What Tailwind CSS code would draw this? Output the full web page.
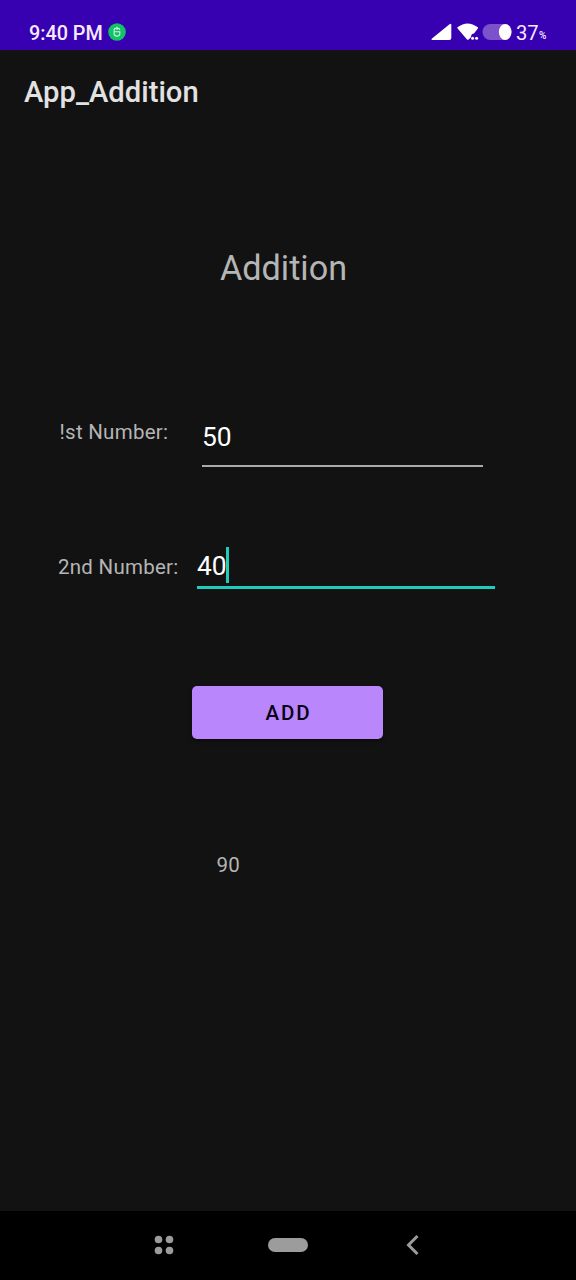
<!DOCTYPE html>
<html lang="en">
<head>
<meta charset="utf-8">
<title>App_Addition</title>
<script src="https://cdn.jsdelivr.net/npm/@tailwindcss/browser@4"></script>
</head>
<body class="bg-[#121212]">
<div class="flex h-[1280px] w-[576px] flex-col overflow-hidden bg-[#121212] font-['Roboto',sans-serif] whitespace-nowrap">
  <header class="flex h-[50px] shrink-0 items-start bg-[#3700b1] pt-[22px] pr-[28px] pl-[29px] text-[#f6e9ff]">
    <span class="mt-[1px] w-[73px] text-[19.800px] leading-[22px] font-medium">9:40 PM</span>
    <svg class="mt-[1px] ml-[5.500px] size-[18px]" viewBox="0 0 18 18" fill="none">
      <circle cx="9" cy="9" r="8.8" fill="#13c266"/>
      <path d="M11.800 7C11.400 4.500 6.300 4.500 6.100 7v4.200c.4 2.600 5.400 2.600 5.700.1V8.800H6.200M9 3.800V7" stroke="#c9f5dc" stroke-width="1.100"/>
    </svg>
    <div class="flex-1"></div>
    <svg class="mt-[1px] h-[18px] w-[22px]" viewBox="0 0 22 18"><path d="M1 15.500 18.500 1.200Q20.300-.2 20.300 2v13q0 2-2 2H2Q-.3 17 1 15.500Z" fill="#fff"/></svg>
    <svg class="mt-[1px] ml-[4px] h-[18px] w-[22px]" viewBox="0 0 22 18" fill="#fff">
      <path d="M.5 4.300Q10.500-3.500 20.800 4.300q.5.600 0 1.300L17 10.400q-2.900.2-3.100 3.800L11.700 16.500q-.9.600-1.700-.1L.6 5.600Q0 4.900.5 4.300Z"/>
      <circle cx="15.600" cy="15.200" r="1.500"/><circle cx="19.600" cy="15.200" r="1.500"/>
    </svg>
    <svg class="mt-[1px] ml-[3px] h-[18px] w-[31px]" viewBox="0 0 31 18"><rect x=".5" y="1" width="29" height="16" rx="8" fill="#7c52ca"/><ellipse cx="23.200" cy="9" rx="6.300" ry="8" fill="#fff"/></svg>
    <span class="ml-[3px] w-[23px] text-[20.200px] leading-[22px]">37</span><span class="mt-[5px] w-[9px] text-[10px] leading-[18px] font-medium">%</span>
  </header>
  <div class="flex h-[86px] shrink-0 items-center pl-[24px]">
    <h1 class="text-[29.200px] leading-none font-medium text-[#e2e2e2]">App_Addition</h1>
  </div>
  <main class="flex flex-1 flex-col text-[20.500px] text-[#b5b5b5]">
    <h2 class="mt-[112px] ml-[220px] text-[34.200px] leading-[40px]">Addition</h2>
    <div class="mt-[117px] flex h-[62px] items-start pl-[59.500px]">
      <label class="w-[142.500px] pt-[15px] leading-[24px] tracking-[0.260px]">!st Number:</label>
      <div class="h-[62px] w-[281px] border-b-2 border-[#aaaaaa] pt-[17px] text-[26.400px] leading-[30px] text-white">50</div>
    </div>
    <div class="mt-[72px] flex h-[50px] items-start pl-[58px]">
      <label class="w-[139px] pt-[16px] leading-[24px] tracking-[0.260px]">2nd Number:</label>
      <div class="flex h-[50px] w-[298px] border-b-[3px] border-[#1fcbbb] text-[26.400px] leading-[30px] text-white"><span class="w-[29px] pt-[12px]">40</span><span class="mt-[8px] h-[36px] w-[3px] bg-[#1fcbbb]"></span></div>
    </div>
    <button class="mt-[97px] ml-[192px] h-[53px] w-[191px] rounded-[5px] bg-[#ba86fb] pl-[2px] text-[20.500px] leading-[24px] font-medium tracking-[1.830px] text-[#090014] shadow-[0_2px_4px_rgba(0,0,0,0.400)]">ADD</button>
    <p class="mt-[114px] ml-[216.500px] leading-[24px] tracking-[0.260px]">90</p>
  </main>
  <nav class="flex h-[69px] shrink-0 items-center bg-black pb-[1px] pl-[154px]">
    <svg class="size-[20px]" viewBox="0 0 20 20" fill="#9c9c9c"><circle cx="4.500" cy="4.500" r="3.800"/><circle cx="15.500" cy="4.500" r="3.800"/><circle cx="4.500" cy="15.500" r="3.800"/><circle cx="15.500" cy="15.500" r="3.800"/></svg>
    <span class="ml-[94px] h-[14px] w-[40px] rounded-full bg-[#9c9c9c]"></span>
    <svg class="ml-[97px] h-[20px] w-[14px]" viewBox="0 0 14 20" fill="none" stroke="#9c9c9c" stroke-width="3"><path d="M12.500 1 3.500 10l9 9"/></svg>
  </nav>
</div>
</body>
</html>
